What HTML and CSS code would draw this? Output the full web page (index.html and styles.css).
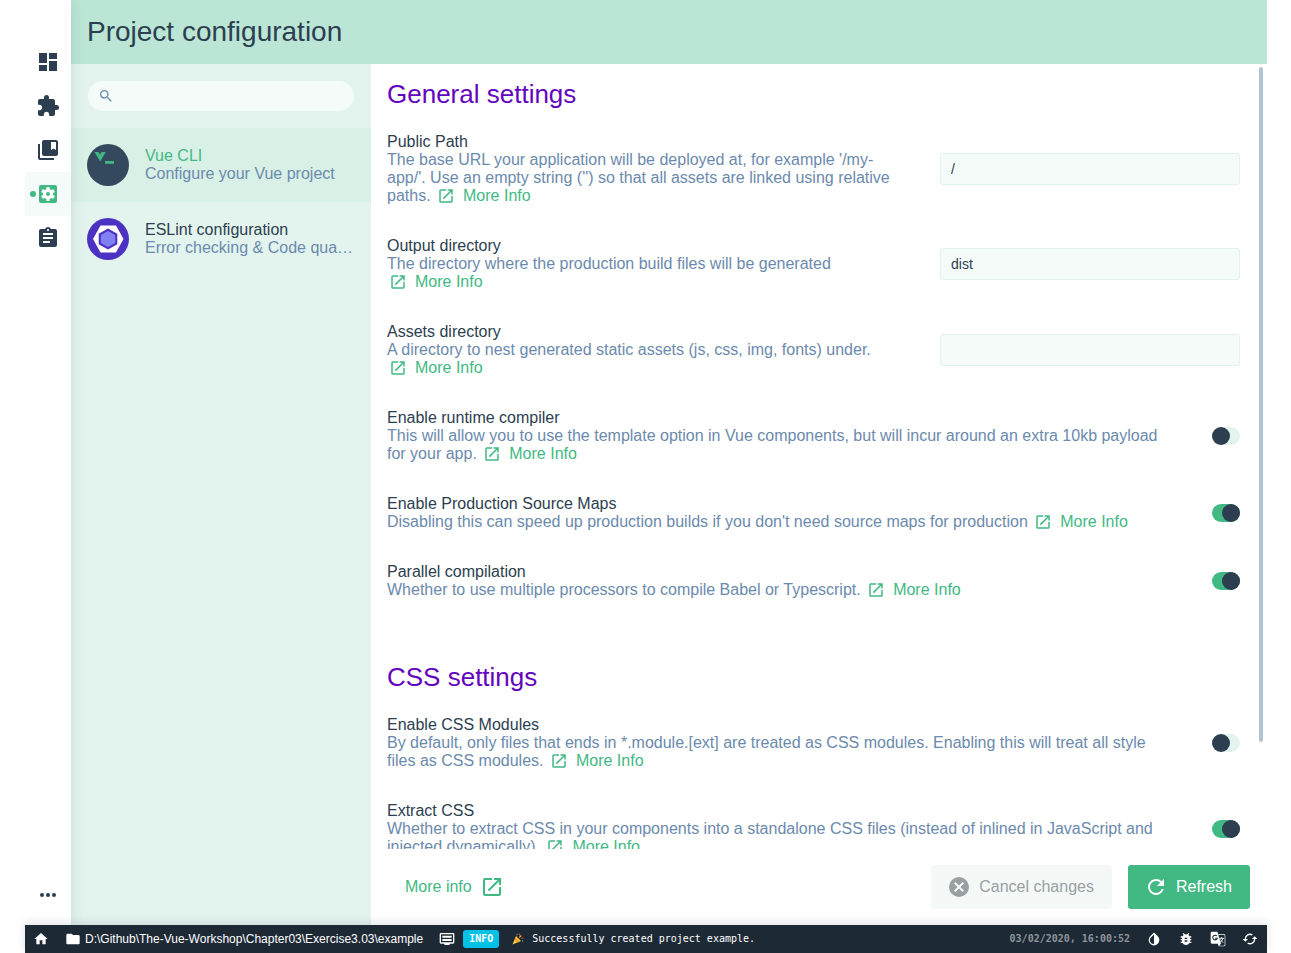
FILE: index.html
```html
<!DOCTYPE html>
<html lang="en">
<head>
<meta charset="utf-8">
<title>Project configuration</title>
<link rel="stylesheet" href="styles.css">
</head>
<body>
<svg class="sprite" aria-hidden="true">
  <symbol id="open" viewBox="0 0 24 24"><path d="M19 19H5V5h7V3H5a2 2 0 0 0-2 2v14a2 2 0 0 0 2 2h14c1.100 0 2-.9 2-2v-7h-2v7zM14 3v2h3.590l-9.830 9.830 1.410 1.410L19 6.410V10h2V3h-7z"/></symbol>
</svg>
<div class="app">
  <div class="workspace">
    <nav class="rail" aria-label="Project">
      <a class="rail-item" href="#dashboard" aria-label="Dashboard"><svg class="icon-l" viewBox="0 0 24 24"><path d="M3 13h8V3H3v10zm0 8h8v-6H3v6zm10 0h8V11h-8v10zm0-18v6h8V3h-8z"/></svg></a>
      <a class="rail-item" href="#plugins" aria-label="Plugins"><svg class="icon-l" viewBox="0 0 24 24"><path d="M20.500 11H19V7c0-1.100-.9-2-2-2h-4V3.500a2.500 2.500 0 0 0-5 0V5H4c-1.100 0-1.990.9-1.990 2v3.800H3.500c1.490 0 2.700 1.210 2.700 2.700s-1.210 2.700-2.700 2.700H2V20c0 1.100.9 2 2 2h3.800v-1.500c0-1.490 1.210-2.700 2.700-2.700s2.700 1.210 2.700 2.700V22H17c1.100 0 2-.9 2-2v-4h1.500a2.500 2.500 0 0 0 0-5z"/></svg></a>
      <a class="rail-item" href="#dependencies" aria-label="Dependencies"><svg class="icon-l" viewBox="0 0 24 24"><path fill-rule="evenodd" d="M4 6H2v14c0 1.100.9 2 2 2h14v-2H4V6zM20 2H8c-1.100 0-2 .9-2 2v12c0 1.100.9 2 2 2h12c1.100 0 2-.9 2-2V4c0-1.100-.9-2-2-2zm0 10l-2.500-1.500L15 12V4h5v8z"/></svg></a>
      <a class="rail-item rail-active" href="#configuration" aria-label="Configuration" aria-current="page"><svg class="icon-l" viewBox="0 0 24 24"><rect x="3" y="3" width="18" height="18" rx="2"/><g fill="#fff"><circle cx="12" cy="12" r="5.200"/><rect x="10.400" y="5" width="3.200" height="14" rx=".5"/><rect x="10.400" y="5" width="3.200" height="14" rx=".5" transform="rotate(60 12 12)"/><rect x="10.400" y="5" width="3.200" height="14" rx=".5" transform="rotate(120 12 12)"/></g><circle cx="12" cy="12" r="2"/></svg></a>
      <a class="rail-item" href="#tasks" aria-label="Tasks"><svg class="icon-l" viewBox="0 0 24 24"><path d="M19 3h-4.180C14.400 1.840 13.300 1 12 1c-1.300 0-2.400.84-2.820 2H5c-1.100 0-2 .9-2 2v14c0 1.100.9 2 2 2h14c1.100 0 2-.9 2-2V5c0-1.100-.9-2-2-2zm-7 0c.55 0 1 .45 1 1s-.45 1-1 1-1-.45-1-1 .45-1 1-1zm2 14H7v-2h7v2zm3-4H7v-2h10v2zm0-4H7V7h10v2z"/></svg></a>
      <button class="rail-item rail-more" aria-label="More"><svg class="icon-l" viewBox="0 0 24 24"><circle cx="6" cy="12" r="2"/><circle cx="12" cy="12" r="2"/><circle cx="18" cy="12" r="2"/></svg></button>
    </nav>

    <div class="page">
      <header class="page-header"><h1>Project configuration</h1></header>
      <div class="columns">
        <aside class="sidebar">
          <label class="search">
            <svg class="icon-s" viewBox="0 0 24 24"><path d="M15.500 14h-.79l-.28-.27A6.470 6.470 0 0 0 16 9.500 6.500 6.500 0 1 0 9.500 16c1.610 0 3.090-.59 4.230-1.570l.27.28v.79l5 4.990L20.490 19l-4.990-5zm-6 0C7.010 14 5 11.990 5 9.500S7.010 5 9.500 5 14 7.010 14 9.500 11.990 14 9.500 14z"/></svg>
            <input type="search" aria-label="Search">
          </label>
          <a class="entry entry-active" href="#vue-cli">
            <svg class="avatar" viewBox="0 0 42 42"><circle cx="21" cy="21" r="21" fill="#35495e"/><path d="M7.500 8h4l1.500 2.500L14.500 8h4.300l-5.600 9.500z" fill="#41b883"/><path d="M18 17h9v2.800h-9z" fill="#41b883"/></svg>
            <span class="entry-text"><span class="entry-name">Vue CLI</span><span class="entry-note">Configure your Vue project</span></span>
          </a>
          <a class="entry" href="#eslint">
            <svg class="avatar" viewBox="0 0 42 42"><circle cx="21" cy="21" r="21" fill="#4b32c3"/><path d="M13.500 7.500h15.500L36.500 21 29 34.500H13.500L6 21z" fill="#fff"/><path d="M21 10.500l9.300 5.200v10.600L21 31.500l-9.300-5.200V15.700z" fill="#4b32c3"/><path d="M21 13l7.200 4v8L21 29l-7.200-4v-8z" fill="#8080f2"/></svg>
            <span class="entry-text"><span class="entry-name">ESLint configuration</span><span class="entry-note">Error checking &amp; Code quality</span></span>
          </a>
        </aside>

        <main class="content">
          <div class="settings-wrap">
            <div class="settings">
              <section class="group">
                <h2>General settings</h2>
                <div class="setting">
                  <div class="setting-text"><label for="public-path">Public Path</label><p>The base URL your application will be deployed at, for example '/my-app/'. Use an empty string ('') so that all assets are linked using relative paths. <a class="more" href="#public-path"><svg class="icon-m"><use href="#open"/></svg>More Info</a></p></div>
                  <input class="field" id="public-path" type="text" value="/">
                </div>
                <div class="setting">
                  <div class="setting-text"><label for="output-dir">Output directory</label><p>The directory where the production build files will be generated <a class="more" href="#output-dir"><svg class="icon-m"><use href="#open"/></svg>More Info</a></p></div>
                  <input class="field" id="output-dir" type="text" value="dist">
                </div>
                <div class="setting">
                  <div class="setting-text"><label for="assets-dir">Assets directory</label><p>A directory to nest generated static assets (js, css, img, fonts) under. <a class="more" href="#assets-dir"><svg class="icon-m"><use href="#open"/></svg>More Info</a></p></div>
                  <input class="field" id="assets-dir" type="text">
                </div>
                <div class="setting">
                  <div class="setting-text"><label for="compiler">Enable runtime compiler</label><p>This will allow you to use the template option in Vue components, but will incur around an extra 10kb payload for your app. <a class="more" href="#compiler"><svg class="icon-m"><use href="#open"/></svg>More Info</a></p></div>
                  <input class="switch" id="compiler" type="checkbox">
                </div>
                <div class="setting">
                  <div class="setting-text"><label for="source-maps">Enable Production Source Maps</label><p>Disabling this can speed up production builds if you don't need source maps for production <a class="more" href="#source-maps"><svg class="icon-m"><use href="#open"/></svg>More Info</a></p></div>
                  <input class="switch" id="source-maps" type="checkbox" checked>
                </div>
                <div class="setting">
                  <div class="setting-text"><label for="parallel">Parallel compilation</label><p>Whether to use multiple processors to compile Babel or Typescript. <a class="more" href="#parallel"><svg class="icon-m"><use href="#open"/></svg>More Info</a></p></div>
                  <input class="switch" id="parallel" type="checkbox" checked>
                </div>
              </section>
              <section class="group">
                <h2>CSS settings</h2>
                <div class="setting">
                  <div class="setting-text"><label for="modules">Enable CSS Modules</label><p>By default, only files that ends in *.module.[ext] are treated as CSS modules. Enabling this will treat all style files as CSS modules. <a class="more" href="#modules"><svg class="icon-m"><use href="#open"/></svg>More Info</a></p></div>
                  <input class="switch" id="modules" type="checkbox">
                </div>
                <div class="setting">
                  <div class="setting-text"><label for="extract">Extract CSS</label><p>Whether to extract CSS in your components into a standalone CSS files (instead of inlined in JavaScript and injected dynamically). <a class="more" href="#extract"><svg class="icon-m"><use href="#open"/></svg>More Info</a></p></div>
                  <input class="switch" id="extract" type="checkbox" checked>
                </div>
              </section>
            </div>
            <div class="scroll-thumb"></div>
          </div>
          <div class="actions">
            <a class="docs" href="#docs">More info<svg class="icon-l"><use href="#open"/></svg></a>
            <button class="btn btn-muted" disabled><svg class="icon-l" viewBox="0 0 24 24"><path d="M12 2a10 10 0 1 0 0 20 10 10 0 0 0 0-20zm5 13.590L15.590 17 12 13.410 8.410 17 7 15.590 10.590 12 7 8.410 8.410 7 12 10.590 15.590 7 17 8.410 13.410 12 17 15.590z"/></svg>Cancel changes</button>
            <button class="btn btn-primary"><svg class="icon-l" viewBox="0 0 24 24"><path d="M17.650 6.350A8 8 0 1 0 19.730 14h-2.080A6 6 0 1 1 12 6c1.660 0 3.140.69 4.220 1.780L13 11h7V4l-2.350 2.350z"/></svg>Refresh</button>
          </div>
        </main>
      </div>
    </div>
  </div>

  <footer class="status">
    <a class="status-item" href="#home" aria-label="Home"><svg class="icon-s" viewBox="0 0 24 24"><path d="M10 20v-6h4v6h5v-8h3L12 3 2 12h3v8z"/></svg></a>
    <button class="status-item path"><svg class="icon-s" viewBox="0 0 24 24"><path d="M10 4H4c-1.100 0-2 .9-2 2v12c0 1.100.9 2 2 2h16c1.100 0 2-.9 2-2V8c0-1.100-.9-2-2-2h-8l-2-2z"/></svg>D:\Github\The-Vue-Workshop\Chapter03\Exercise3.03\example</button>
    <button class="status-item log"><svg class="icon-s" viewBox="0 0 24 24"><path fill-rule="evenodd" d="M21 3H3a2 2 0 0 0-2 2v12c0 1.100.9 2 2 2h5v2h8v-2h5a2 2 0 0 0 2-2V5a2 2 0 0 0-2-2zm0 14H3V5h18v12zM5 7h14v3H5zm0 5h14v3H5z"/></svg><span class="tag">INFO</span><svg class="party" viewBox="0 0 12 12"><path d="M4 3l5 5-8.500 3.500z" fill="#ffc83d"/><path d="M3.300 5l4 4-1.500.6-3.200-3z" fill="#f28c28"/><path d="M7 .5l1 2M9.500 5l2 .4" stroke="#d93b4a" stroke-width="1.200"/><path d="M7.300 4.500l2-2" stroke="#f5a623" stroke-width="1.200"/><circle cx="5" cy="1.500" r=".7" fill="#42a5d9"/><circle cx="10.500" cy="8" r=".7" fill="#42b983"/></svg>Successfully created project example.</button>
    <time class="date">03/02/2020, 16:00:52</time>
    <button class="status-item" aria-label="Toggle theme"><svg class="icon-s" viewBox="0 0 24 24"><path fill-rule="evenodd" d="M17.660 7.930L12 2.270 6.340 7.930a8 8 0 1 0 11.320 0zM12 19.590a5.900 5.900 0 0 1-4.240-10.240L12 5.100v14.490z"/></svg></button>
    <button class="status-item" aria-label="Report a bug"><svg class="icon-s" viewBox="0 0 24 24"><path d="M20 8h-2.810a5.985 5.985 0 0 0-1.820-1.960L17 4.410 15.590 3l-2.170 2.170a6.002 6.002 0 0 0-2.830 0L8.410 3 7 4.410l1.620 1.630C7.880 6.550 7.260 7.220 6.810 8H4v2h2.090c-.05.33-.09.66-.09 1v1H4v2h2v1c0 .34.04.67.09 1H4v2h2.810a6 6 0 0 0 10.380 0H20v-2h-2.090c.05-.33.09-.66.09-1v-1h2v-2h-2v-1c0-.34-.04-.67-.09-1H20V8zm-6 8h-4v-2h4v2zm0-4h-4v-2h4v2z"/></svg></button>
    <button class="status-item" aria-label="Translate"><svg class="icon-s" viewBox="0 0 24 24"><path fill-rule="evenodd" d="M3 1h8l1.200 4H21a2 2 0 0 1 2 2v14a2 2 0 0 1-2 2h-8l-1.200-4H3a2 2 0 0 1-2-2V3a2 2 0 0 1 2-2zm9.500 5l4 13-3 3H21a1 1 0 0 0 1-1V7a1 1 0 0 0-1-1z"/><path d="M10.300 7.500A3.500 3.500 0 1 0 11 11H7.500" fill="none" stroke="#1d2935" stroke-width="1.600"/><path d="M14 11h7M17 9v2M19.500 11q-1 4-4.500 6M15.500 12.500l4 5" fill="none" stroke="#fff" stroke-width="1.300"/></svg></button>
    <button class="status-item" aria-label="Reload"><svg class="icon-s" viewBox="0 0 24 24"><path d="M19 8l-4 4h3a6 6 0 0 1-8.800 5.300l-1.460 1.460A8 8 0 0 0 20 12h3l-4-4zM6 12a6 6 0 0 1 8.800-5.300l1.460-1.460A8 8 0 0 0 4 12H1l4 4 4-4H6z"/></svg></button>
  </footer>
</div>
</body>
</html>
```
FILE: styles.css
```css
* { box-sizing: border-box; }

body {
  margin: 0;
  padding: 0 24px 0 25px;
  background: #fff;
  color: #2c3e50;
  font: 16px/18px "Liberation Sans", Arial, sans-serif;
}

h1, h2, p { margin: 0; font-weight: 400; }
a { color: inherit; text-decoration: none; }
button, input { margin: 0; border: 0; background: none; color: inherit; font: inherit; }
button { padding: 0; cursor: pointer; }
svg { flex: none; fill: currentColor; }

.sprite { display: none; }
.icon-s { width: 16px; height: 16px; }
.icon-m { width: 18px; height: 18px; }
.icon-l { width: 24px; height: 24px; }

.app { display: flex; flex-direction: column; height: 100vh; }
.workspace { display: flex; flex: 1; min-height: 0; }

.rail {
  display: flex;
  flex-direction: column;
  width: 46px;
  padding: 40px 0 8px;
  background: #fff;
  box-shadow: 0 0 14px rgba(44, 62, 80, .14);
  clip-path: inset(0 -20px 0 0);
  z-index: 1;
}
.rail-item {
  position: relative;
  display: flex;
  align-items: center;
  justify-content: center;
  height: 44px;
}
.rail-active { background: #f5fbf9; color: #42b983; }
.rail-active::before {
  content: "";
  position: absolute;
  left: 5px;
  width: 6px;
  height: 6px;
  border-radius: 50%;
  background: currentColor;
}
.rail-more { margin-top: auto; }

.page { display: flex; flex: 1; flex-direction: column; min-width: 0; }
.page-header { display: flex; align-items: center; height: 64px; padding: 0 16px; background: #bbe6d6; }
h1 { font-size: 28px; line-height: 32px; }
.columns { display: flex; flex: 1; min-height: 0; }

.sidebar { flex: none; width: 300px; background: #e3f4ee; }
.search {
  display: flex;
  align-items: center;
  gap: 8px;
  height: 30px;
  margin: 17px;
  padding: 0 10px;
  border-radius: 15px;
  background: #f5fbf9;
  color: #6d8bb0;
}
.search input { flex: 1; min-width: 0; outline: 0; }
.entry { display: flex; align-items: center; gap: 16px; height: 74px; padding: 0 16px; }
.entry-active { background: #d9f0e6; }
.entry-active .entry-name { color: #42b983; }
.avatar { width: 42px; height: 42px; }
.entry-text { min-width: 0; }
.entry-name, .entry-note { display: block; overflow: hidden; text-overflow: ellipsis; white-space: nowrap; }
.entry-note { color: #6b8aad; }

.content { display: flex; flex: 1; flex-direction: column; min-width: 0; }
.settings-wrap { position: relative; flex: 1; min-height: 0; }
.settings { height: 100%; padding: 15px 27px 0 16px; overflow-y: auto; scrollbar-width: none; }
.scroll-thumb {
  position: absolute;
  top: 3px;
  right: 4px;
  width: 4px;
  height: 86%;
  border-radius: 2px;
  background: #b1c4d2;
}
.group { margin-bottom: 47px; }
h2 { margin-bottom: 8px; color: #6304be; font-size: 26px; line-height: 30px; }
.setting { display: flex; align-items: center; gap: 40px; padding: 16px 0; }
.setting-text { flex: 1; }
.setting-text label { display: block; }
.setting-text p { color: #6b8aad; }
.more { display: inline-flex; gap: 8px; padding: 0 2px; color: #42b983; vertical-align: top; }
.field {
  flex: none;
  width: 300px;
  height: 32px;
  padding: 0 10px;
  border: 1px solid #e0f3ec;
  border-radius: 3px;
  background: #f5fbf9;
  font-size: 14px;
}
.switch {
  flex: none;
  display: flex;
  width: 28px;
  height: 18px;
  appearance: none;
  border-radius: 9px;
  background: #e3f4ee;
}
.switch::before { content: ""; width: 18px; height: 18px; border-radius: 50%; background: #2c3e50; }
.switch:checked { justify-content: flex-end; background: #42b983; }

.actions { display: flex; align-items: center; gap: 16px; padding: 16px 17px 16px 16px; }
.docs { display: flex; align-items: center; gap: 8px; margin-right: auto; padding: 0 18px; color: #42b983; }
.btn {
  display: flex;
  align-items: center;
  gap: 8px;
  height: 44px;
  padding: 0 18px 0 16px;
  border-radius: 3px;
}
.btn-muted { background: #f4f9f8; color: #999fa3; }
.btn-primary { background: #42b983; color: #fff; }

.status {
  display: flex;
  align-items: center;
  height: 28px;
  padding: 0 1px 0 0;
  background: #1d2935;
  box-shadow: 0 -2px 10px rgba(44, 62, 80, .15);
  color: #fff;
  font-size: 12px;
  z-index: 2;
}
.status-item { display: flex; align-items: center; height: 28px; padding: 0 8px; }
.path { gap: 4px; }
.log, .date { font: 10px/18px "DejaVu Sans Mono", monospace; }
.log { gap: 8px; }
.tag { padding: 0 6px; border-radius: 3px; background: #03c2e6; font-weight: 700; }
.party { width: 12px; height: 12px; margin-left: 5px; }
.date { margin-left: auto; padding: 0 8px; color: #8e949a; font-weight: 700; }
```
